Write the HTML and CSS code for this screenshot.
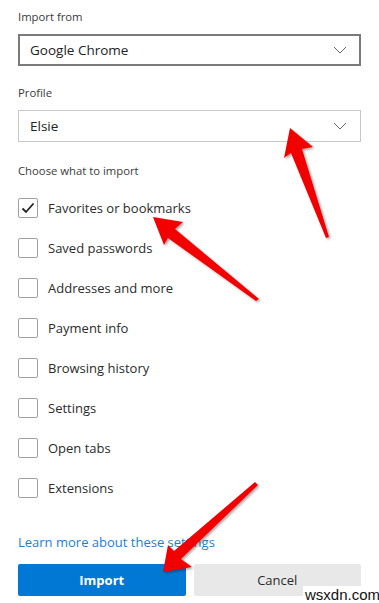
FILE: index.html
```html
<!DOCTYPE html>
<html>
<head>
<meta charset="utf-8">
<link rel="stylesheet" href="styles.css">
</head>
<body>
<div class="panel">
  <div class="label">Import from</div>
  <div class="select focused"><span>Google Chrome</span>
    <svg class="chev" width="14" height="8" viewBox="0 0 14 8"><path d="M1 1 L7 7 L13 1" fill="none" stroke="#666" stroke-width="1"/></svg>
  </div>
  <div class="label gap">Profile</div>
  <div class="select"><span>Elsie</span>
    <svg class="chev" width="14" height="8" viewBox="0 0 14 8"><path d="M1 1 L7 7 L13 1" fill="none" stroke="#666" stroke-width="1"/></svg>
  </div>
  <div class="label gap2">Choose what to import</div>
  <ul class="opts">
    <li><span class="box"><svg width="14" height="12" viewBox="0 0 14 12"><path d="M1.5 6.5 L5 10 L12.5 1.5" fill="none" stroke="#222" stroke-width="1.8"/></svg></span>Favorites or bookmarks</li>
    <li><span class="box"></span>Saved passwords</li>
    <li><span class="box"></span>Addresses and more</li>
    <li><span class="box"></span>Payment info</li>
    <li><span class="box"></span>Browsing history</li>
    <li><span class="box"></span>Settings</li>
    <li><span class="box"></span>Open tabs</li>
    <li><span class="box"></span>Extensions</li>
  </ul>
  <a class="link">Learn more about these settings</a>
  <div class="buttons">
    <button class="btn primary">Import</button>
    <button class="btn secondary">Cancel</button>
  </div>
</div>
<svg class="arrows" width="379" height="603" viewBox="0 0 379 603">
  <defs>
    <filter id="sh" x="-20%" y="-20%" width="140%" height="140%">
      <feDropShadow dx="1.5" dy="1.5" stdDeviation="1.2" flood-color="#000" flood-opacity="0.35"/>
    </filter>
  </defs>
  <g fill="#f20000" filter="url(#sh)">
    <polygon points="290,128 313,147 302,149 329,237 326,238 291,153 284,158"/>
    <polygon points="153,217 183,222 175,229 259,299 256,301 168,238 164,245"/>
    <polygon points="163,572 168,545 174,551 255,482 258,485 181,559 192,567"/>
  </g>
</svg>
<span class="wm">wsxdn.com</span>
</body>
</html>
```
FILE: styles.css
```css
html, body {
  margin: 0;
  padding: 0;
  background: #fff;
}
body {
  width: 379px;
  height: 603px;
  position: relative;
  overflow: hidden;
  font-family: "Open Sans", "Noto Sans", sans-serif;
  color: #2b2b2b;
}
.panel {
  padding: 8px 18px 0 18px;
  display: flex;
  flex-direction: column;
}
.label {
  font-size: 11.3px;
  line-height: 18px;
  color: #3a3a3a;
}
.label.gap { margin-top: 18px; }
.label.gap2 { margin-top: 20px; }
.select {
  margin-top: 8px;
  height: 32px;
  box-sizing: border-box;
  border: 1px solid #c8c8c8;
  display: flex;
  align-items: center;
  justify-content: space-between;
  padding: 0 13px 0 11px;
  font-size: 13.5px;
  color: #222;
}
.select.focused {
  border: 2px solid #7a7a7a;
  padding: 0 12px 0 10px;
}
.chev { display: block; }
.opts {
  list-style: none;
  margin: 8px 0 0 0;
  padding: 0;
}
.opts li {
  height: 40px;
  display: flex;
  align-items: center;
  font-size: 13px;
  color: #2b2b2b;
}
.box {
  width: 20px;
  height: 20px;
  box-sizing: border-box;
  border: 1px solid #a0a0a0;
  border-radius: 2px;
  margin-right: 10px;
  display: flex;
  align-items: center;
  justify-content: center;
  background: #fff;
}
.link {
  margin-top: 24px;
  font-size: 13px;
  line-height: 20px;
  color: #1a7fd4;
}
.buttons {
  margin-top: 12px;
  display: flex;
  gap: 8px;
}
.btn {
  flex: 1;
  height: 32px;
  border: none;
  border-radius: 2px;
  font-family: "Open Sans", "Noto Sans", sans-serif;
  font-size: 13px;
}
.primary {
  background: #0078d4;
  color: #fff;
  font-weight: 700;
}
.secondary {
  background: #e8e8e8;
  color: #2b2b2b;
}
.arrows {
  position: absolute;
  left: 0;
  top: 0;
  pointer-events: none;
}
.wm {
  position: absolute;
  left: 303px;
  top: 586px;
  width: 76px;
  height: 17px;
  background: #fff;
  font-family: "Liberation Sans", Arial, sans-serif;
  font-size: 15px;
  line-height: 17px;
  color: #111;
  padding-left: 2px;
  box-sizing: border-box;
}
```
